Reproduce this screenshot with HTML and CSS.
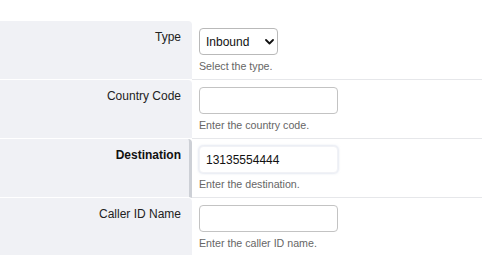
FILE: index.html
```html
<!DOCTYPE html>
<html>
<head>
<meta charset="utf-8">
<link rel="stylesheet" href="styles.css">
</head>
<body>
<div class="form">
  <div class="row">
    <div class="label">Type</div>
    <div class="field">
      <div class="select-wrap">
        <select class="select"><option>Inbound</option></select>
        <svg class="chev" width="9" height="6" viewBox="0 0 9 6"><path d="M1 1 L4.5 4.5 L8 1" fill="none" stroke="#111" stroke-width="1.8" stroke-linecap="round" stroke-linejoin="round"/></svg>
      </div>
      <div class="desc">Select the type.</div>
    </div>
  </div>
  <div class="row">
    <div class="label">Country Code</div>
    <div class="field">
      <input class="input" type="text" value="">
      <div class="desc">Enter the country code.</div>
    </div>
  </div>
  <div class="row">
    <div class="label label-active">Destination</div>
    <div class="field">
      <input class="input input-focus" type="text" value="13135554444">
      <div class="desc">Enter the destination.</div>
    </div>
  </div>
  <div class="row">
    <div class="label">Caller ID Name</div>
    <div class="field">
      <input class="input" type="text" value="">
      <div class="desc">Enter the caller ID name.</div>
    </div>
  </div>
</div>
</body>
</html>
```
FILE: styles.css
```css
html, body {
  margin: 0;
  padding: 0;
  background: #fff;
  font-family: "Liberation Sans", Arial, sans-serif;
}
.form {
  padding-top: 21px;
}
.row {
  display: grid;
  grid-template-columns: 192px 1fr;
  height: 59px;
}
.label {
  box-sizing: border-box;
  background: #f0f1f5;
  border-top-right-radius: 4px;
  border-bottom: 1px solid #fff;
  text-align: right;
  padding: 9px 11px 0 0;
  font-size: 12px;
  line-height: 14px;
  color: #222;
}
.label-active {
  font-weight: bold;
  color: #111;
  border-right: 3px solid #cdd0d6;
  padding-right: 8px;
}
.field {
  box-sizing: border-box;
  border-bottom: 1px solid #e6e7ea;
  padding: 7px 0 0 7px;
}
.select-wrap {
  position: relative;
  width: 79px;
  height: 27px;
}
.select {
  -webkit-appearance: none;
  appearance: none;
  box-sizing: border-box;
  width: 79px;
  height: 27px;
  margin: 0;
  border: 1px solid #b9b9b9;
  border-radius: 4px;
  background: #fff;
  padding: 0 0 0 6px;
  font-family: "Liberation Sans", Arial, sans-serif;
  font-size: 12px;
  color: #111;
  outline: none;
}
.chev {
  position: absolute;
  left: 66px;
  top: 11px;
  pointer-events: none;
}
.input {
  display: block;
  box-sizing: border-box;
  width: 139px;
  height: 27px;
  margin: 0;
  border: 1px solid #c3c3c3;
  border-radius: 4px;
  background: #fff;
  padding: 0 6px;
  font-family: "Liberation Sans", Arial, sans-serif;
  font-size: 12px;
  color: #111;
  outline: none;
}
.input-focus {
  border-color: #f1f2f6;
  box-shadow: 0 0 2px 1px rgba(210, 216, 232, 0.55);
}
.desc {
  margin-top: 5px;
  font-size: 10.67px;
  line-height: 12px;
  color: #666;
}
```
